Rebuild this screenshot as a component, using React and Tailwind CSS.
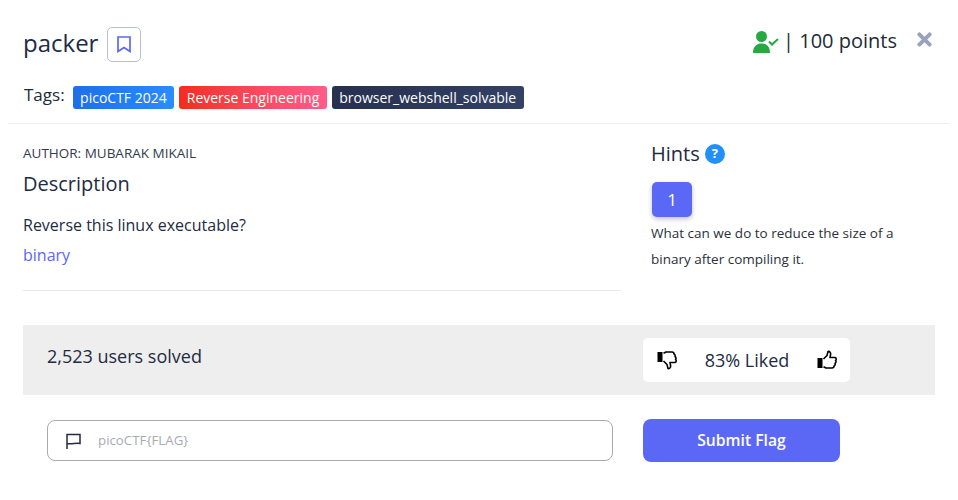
import React from "react";
import { FaTimes } from "react-icons/fa";

function Tag({ className, children }) {
  return (
    <span className={`h-[23px] px-[7.5px] flex items-center rounded-[3px] text-[14px] font-medium text-white ${className}`}>
      {children}
    </span>
  );
}

function ThumbUp({ className }) {
  return (
    <svg width="20" height="20" viewBox="0 0 20 20" className={className}>
      <rect x="0.5" y="8" width="5" height="10" fill="#000" />
      <path
        d="M6.5 9 L10 5.5 L11 1.5 C13 1 14 3 13.5 5 L13 7.5 L18 7.5 C19.5 7.5 19.5 10 18.5 10.5 C19.5 11.5 19 13 18 13.3 C18.5 14.5 17.8 15.7 17 16 C17 17.5 16 18 15 18 L9 18 L6.5 16.8"
        fill="none"
        stroke="#000"
        strokeWidth="1.6"
        strokeLinejoin="round"
      />
    </svg>
  );
}

function UserCheck() {
  return (
    <svg width="26" height="22" viewBox="0 0 26 22" fill="#28a745">
      <circle cx="8.5" cy="5.5" r="5.5" />
      <path d="M0 22 C0 15 4 12.5 8.5 12.5 C13 12.5 17 15 17 22 Z" />
      <path d="M16 10.5 L19 13.5 L25 8" fill="none" stroke="#28a745" strokeWidth="2" />
    </svg>
  );
}

export default function App() {
  return (
    <div className="w-[958px] h-[500px] bg-white overflow-hidden font-['Open_Sans',sans-serif] text-[#232b42]">
      {/* header */}
      <div className="mx-2 h-[124px] border-b border-[#eff0f1] px-[15px]">
        <div className="flex items-start justify-between pt-[26px] h-[85px]">
          <div className="flex items-center">
            <h1 className="text-[24px] leading-[34px] pb-[3px] text-[#212b45]">packer</h1>
            <button className="ml-[9px] w-[34px] h-[35px] border border-[#b9bfcc] rounded-[5px] flex items-center justify-center">
              <svg width="14" height="17" viewBox="0 0 14 17" fill="none" stroke="#5b68f6" strokeWidth="1.7">
                <path d="M1 1 H13 V15.5 L7 11.5 L1 15.5 Z" />
              </svg>
            </button>
          </div>
          <div className="flex items-center">
            <UserCheck />
            <span className="ml-[4px] h-[32px] text-[20px] leading-[30px] text-[#212b36]">| 100 points</span>
            <FaTimes size={21} className="ml-[17px] text-[#9aa3bd] -mt-[6px]" />
          </div>
        </div>
        <div className="flex items-center ml-[1px]">
          <span className="text-[17px] mr-[8px] -mt-[4px] text-[#212b36]">Tags:</span>
          <div className="flex gap-[5px] mt-[1px]">
            <Tag className="bg-gradient-to-r from-[#1d6fe8] to-[#2b8cff]">picoCTF 2024</Tag>
            <Tag className="bg-gradient-to-r from-[#f32b1c] to-[#ff5c8a]">Reverse Engineering</Tag>
            <Tag className="bg-gradient-to-r from-[#27304f] to-[#334166]">browser_webshell_solvable</Tag>
          </div>
        </div>
      </div>

      {/* body */}
      <div className="flex px-[23px] h-[201px]">
        <div className="w-[598px]">
          <div className="h-[167px] border-b border-[#e9eaec]">
            <div className="pt-[20px] text-[13.5px] leading-[18px] text-[#333a4d]">AUTHOR: MUBARAK MIKAIL</div>
            <h2 className="mt-[8px] text-[20px] leading-[28px]">Description</h2>
            <p className="mt-[15px] text-[16px] leading-[24px]">Reverse this linux executable?</p>
            <a className="block mt-[6px] text-[16px] leading-[24px] text-[#5b68f6]">binary</a>
          </div>
        </div>
        <div className="ml-[30px] flex-1">
          <div className="flex items-center pt-[17px]">
            <h2 className="text-[20px] leading-[26px]">Hints</h2>
            <span className="ml-[5px] w-[20px] h-[20px] rounded-full bg-[#2091f9] text-white text-[13px] font-bold flex items-center justify-center">?</span>
          </div>
          <button className="mt-[15px] ml-[1px] w-[40px] h-[35px] rounded-[5px] bg-[#5b68f6] text-white text-[17px] shadow-[0_2px_5px_rgba(0,0,0,0.25)]">1</button>
          <p className="mt-[3px] w-[265px] text-[13.5px] leading-[26px] text-[#2b2f3a]">
            What can we do to reduce the size of a binary after compiling it.
          </p>
        </div>
      </div>

      {/* solved bar */}
      <div className="mx-[23px] h-[70px] bg-[#eeeeee] flex">
        <div className="w-[620px] pl-[24px] pt-[19px] text-[18px] leading-[24px]">2,523 users solved</div>
        <div className="mt-[13px] w-[207px] h-[44px] rounded-[5px] bg-white flex items-center justify-between pl-[14px] pr-[13px]">
          <ThumbUp className="rotate-180 scale-x-[-1]" />
          <span className="text-[18px]">83% Liked</span>
          <ThumbUp />
        </div>
      </div>

      {/* flag form */}
      <div className="flex mx-[23px] mt-[24px]">
        <div className="ml-[24px] mt-[1px] w-[566px] h-[41px] border border-[#a9abb0] rounded-[8px] flex items-center pl-[18px]">
          <svg width="15" height="16" viewBox="0 0 15 16" fill="none" stroke="#212b45" strokeWidth="1.5">
            <path d="M1 16 V1.5 H14 V10.5 C10 9.5 6 11.5 1 10.5" />
          </svg>
          <span className="ml-[17px] text-[13.3px] text-[#a8abb2]">picoCTF{"{FLAG}"}</span>
        </div>
        <button className="ml-[30px] w-[197px] h-[43px] rounded-[8px] bg-[#5b68f6] text-white text-[15.7px] font-semibold">Submit Flag</button>
      </div>
    </div>
  );
}
